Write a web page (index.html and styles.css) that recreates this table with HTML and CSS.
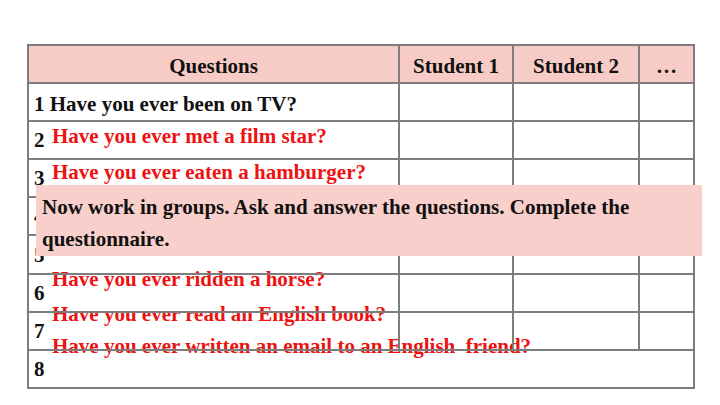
FILE: index.html
```html
<!DOCTYPE html>
<html>
<head>
<meta charset="utf-8">
<link rel="stylesheet" href="styles.css">
</head>
<body>
<div class="sheet">
  <div class="answers">
    <div class="answer a2">Have you ever met a film star?</div>
    <div class="answer a3">Have you ever eaten a hamburger?</div>
    <div class="answer a6">Have you ever ridden a horse?</div>
    <div class="answer a7">Have you ever read an English book?</div>
    <div class="answer a8">Have you ever written an email to an English &nbsp;friend?</div>
  </div>
  <table class="quiz">
    <colgroup>
      <col class="c-q"><col class="c-s1"><col class="c-s2"><col class="c-more">
    </colgroup>
    <tr class="head"><th>Questions</th><th>Student 1</th><th>Student 2</th><th>…</th></tr>
    <tr class="first"><td>1 Have you ever been on TV?</td><td></td><td></td><td></td></tr>
    <tr><td>2</td><td></td><td></td><td></td></tr>
    <tr><td>3</td><td></td><td></td><td></td></tr>
    <tr><td>4</td><td></td><td></td><td></td></tr>
    <tr><td>5</td><td></td><td></td><td></td></tr>
    <tr><td>6</td><td></td><td></td><td></td></tr>
    <tr><td>7</td><td></td><td></td><td></td></tr>
    <tr><td colspan="4">8</td></tr>
  </table>
  <div class="task">Now work in groups. Ask and answer the questions. Complete the questionnaire.</div>
</div>
</body>
</html>
```
FILE: styles.css
```css
html, body {
  margin: 0;
  padding: 0;
  background: #ffffff;
}
body {
  width: 720px;
  height: 405px;
  overflow: hidden;
  font-family: "Liberation Serif", "Times New Roman", serif;
  font-weight: bold;
  font-size: 21px;
  color: #111111;
}
.sheet {
  position: relative;
  margin: 44px 0 0 27px;
  width: 666px;
}
.quiz {
  position: relative;
  z-index: 1;
  width: 666px;
  border-collapse: collapse;
  table-layout: fixed;
  border: 2px solid #808080;
}
.c-q { width: 371px; }
.c-s1 { width: 114px; }
.c-s2 { width: 126px; }
.c-more { width: 55px; }
.quiz tr { height: 38.1px; }
.quiz th, .quiz td {
  border: 2px solid #7d7d7d;
  padding: 0 0 5px 5px;
  vertical-align: bottom;
  text-align: left;
  white-space: nowrap;
  line-height: normal;
  background: transparent;
}
.quiz th {
  background: #f8ccc6;
  text-align: center;
  padding: 0 0 3px 0;
  font-weight: bold;
}
.quiz .first td { padding-bottom: 3px; }
.answers {
  position: absolute;
  left: 0;
  top: 0;
  z-index: 0;
}
.answer {
  position: absolute;
  left: 25px;
  white-space: nowrap;
  color: #ee1111;
  line-height: normal;
}
.a2 { top: 80px; }
.a3 { top: 116px; }
.a6 { top: 223px; }
.a7 { top: 258px; }
.a8 { top: 290px; }
.task {
  position: absolute;
  z-index: 2;
  left: 9px;
  top: 141px;
  width: 666px;
  height: 71px;
  box-sizing: border-box;
  padding: 7px 40px 0 6px;
  background: #f8cfca;
  line-height: 31.5px;
  color: #111111;
}
```
